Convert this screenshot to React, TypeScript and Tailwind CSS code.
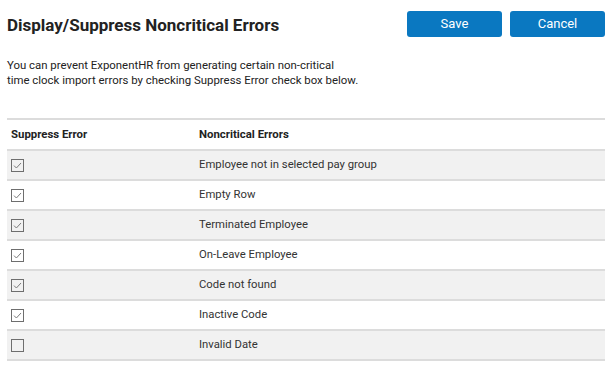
import { useState } from "react";

interface ErrorRow {
  id: string;
  label: string;
  suppressed: boolean;
}

const initialRows: ErrorRow[] = [
  { id: "paygroup", label: "Employee not in selected pay group", suppressed: true },
  { id: "empty", label: "Empty Row", suppressed: true },
  { id: "terminated", label: "Terminated Employee", suppressed: true },
  { id: "leave", label: "On-Leave Employee", suppressed: true },
  { id: "code", label: "Code not found", suppressed: true },
  { id: "inactive", label: "Inactive Code", suppressed: true },
  { id: "date", label: "Invalid Date", suppressed: false },
];

function CheckBox({ checked, onClick }: { checked: boolean; onClick: () => void }) {
  return (
    <button
      type="button"
      onClick={onClick}
      className="w-[13px] h-[13px] border border-[#6e6e6e] flex items-center justify-center p-0"
    >
      {checked && (
        <svg width="9" height="7" viewBox="0 0 9 7" fill="none">
          <path d="M1 3.6 L3.4 6 L8 1" stroke="#7a7a7a" strokeWidth="1" />
        </svg>
      )}
    </button>
  );
}

export default function App() {
  const [rows, setRows] = useState(initialRows);

  function toggle(id: string) {
    setRows(rows.map(r => (r.id === id ? { ...r, suppressed: !r.suppressed } : r)));
  }

  return (
    <div className="bg-white min-h-screen pl-[7px] pr-[9px] pt-[11px] font-['Roboto',sans-serif] text-[#222]">
      <div className="flex items-start justify-between">
        <h1 className="text-[17px] font-bold mt-[3px] leading-[22px] text-[#222]">Display/Suppress Noncritical Errors</h1>
        <div className="flex gap-2">
          <button className="w-[95px] h-[26px] rounded-[3px] bg-[#0a78c1] text-white text-[13px]">Save</button>
          <button className="w-[95px] h-[26px] rounded-[3px] bg-[#0a78c1] text-white text-[13px]">Cancel</button>
        </div>
      </div>

      <p className="mt-[21px] text-[11.4px] leading-[15px] text-[#222]">
        You can prevent ExponentHR from generating certain non-critical
        <br />
        time clock import errors by checking Suppress Error check box below.
      </p>

      <div className="mt-[30px] border-t-2 border-[#dcdcdc]">
        <div className="flex items-center h-[31px] border-b-2 border-[#dcdcdc] text-[11.4px] font-bold text-[#222]">
          <div className="w-[192px] pl-[4px]">Suppress Error</div>
          <div>Noncritical Errors</div>
        </div>
        {rows.map((row, i) => (
          <div
            key={row.id}
            className={`flex items-center h-[30px] border-b-2 border-[#dcdcdc] text-[11.3px] text-[#333] ${i % 2 === 0 ? "bg-[#f1f1f1]" : "bg-white"}`}
          >
            <div className="w-[192px] pl-[4px] flex">
              <CheckBox checked={row.suppressed} onClick={() => toggle(row.id)} />
            </div>
            <div>{row.label}</div>
          </div>
        ))}
      </div>
    </div>
  );
}
